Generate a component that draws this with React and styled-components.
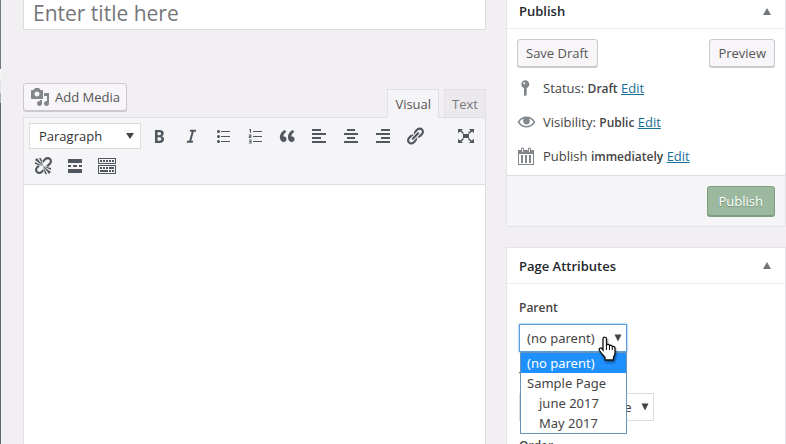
import React from "react";
import styled, { createGlobalStyle, css } from "styled-components";

const GlobalStyle = createGlobalStyle`
  *, *::before, *::after { box-sizing: border-box; }
  body {
    margin: 0;
    background: #f1eff2;
    color: #444;
    font-family: "Open Sans", "Noto Sans", sans-serif;
    font-size: 13px;
    line-height: 20px;
  }
  button, input, select, textarea { font: inherit; color: inherit; margin: 0; }
  svg { display: block; }
`;

const Page = styled.div`
  display: flex;
  height: 100vh;
  overflow: hidden;
`;

const MenuEdge = styled.div`
  flex: none;
  width: 1px;
  background: linear-gradient(#6f7b80 0 69px, #f6f6f6 69px 79px, #e4e4e6 79px 93px, #a9b2b2 93px 103px, #5d696e 103px);
`;

const Content = styled.div`
  flex: 1;
  min-width: 0;
  display: grid;
  grid-template-columns: minmax(0, 1fr) 280px;
  align-items: start;
  gap: 20px;
  padding-left: 22px;
`;

const Main = styled.main`
  display: flex;
  flex-direction: column;
  height: 100vh;
`;

const TitleInput = styled.input`
  width: 100%;
  height: 30px;
  flex: none;
  padding: 0 9px 4px;
  border: 1px solid #ddd;
  border-top: 0;
  background: #fff;
  font-size: 21px;
  line-height: 26px;
  outline: none;
  &::placeholder { color: #757678; opacity: 1; }
`;

const EditorTools = styled.div`
  display: flex;
  justify-content: space-between;
  align-items: flex-start;
  padding-top: 53px;
`;

const Button = styled.button`
  display: inline-flex;
  align-items: center;
  gap: 5px;
  height: 28px;
  padding: 0 8px;
  border: 1px solid #ccc9ce;
  border-radius: 3px;
  background: #f7f5f8;
  box-shadow: 0 1px 0 #ccc9ce;
  color: #555;
  white-space: nowrap;
  ${(p) => p.$media && css`padding: 0 6px;`}
  ${(p) => p.$primary && css`
    height: 30px;
    padding: 0 11px;
    background: #9cb99f;
    border-color: #7c9f80;
    box-shadow: 0 1px 0 #7c9f80;
    color: #fff;
    text-shadow: 0 1px 1px #6d9272;
  `}
`;

const Tabs = styled.div`
  display: flex;
  gap: 5px;
  padding-top: 6px;
`;

const Tab = styled.button`
  position: relative;
  height: 28px;
  padding: 0 7px;
  border: 1px solid #e1dfe3;
  border-bottom: 0;
  background: ${(p) => (p.$active ? "#f5f4f6" : "#ebe9ec")};
  color: ${(p) => (p.$active ? "#555" : "#777")};
  ${(p) => p.$active && css`height: 29px; margin-bottom: -1px;`}
`;

const Editor = styled.section`
  flex: 1;
  display: flex;
  flex-direction: column;
  border: 1px solid #e0dee2;
  border-bottom: 0;
  background: #fff;
`;

const Toolbar = styled.div`
  display: flex;
  flex-direction: column;
  padding: 3px 5px;
  background: #f5f4f6;
  border-bottom: 1px solid #dedce0;
`;

const ToolRow = styled.div`
  display: flex;
  align-items: center;
  gap: 4px;
  height: 30px;
`;

const ToolButton = styled.button`
  display: grid;
  place-items: center;
  width: 28px;
  height: 28px;
  padding: 0;
  border: 0;
  background: none;
  color: #50575f;
  ${(p) => p.$end && css`margin-left: auto;`}
`;

const TextArea = styled.textarea`
  flex: 1;
  width: 100%;
  border: 0;
  padding: 10px;
  resize: none;
  outline: none;
  background: #fff;
`;

const SelectWrap = styled.div`
  position: relative;
  width: ${(p) => p.$width};
`;

const Select = styled.select`
  appearance: none;
  display: block;
  width: 100%;
  height: 28px;
  padding: 0 20px 0 7px;
  border: 1px solid #ddd;
  border-radius: 0;
  background: #fff;
  font-family: "Noto Sans", "Open Sans", sans-serif;
  outline: none;
  ${(p) => p.$toolbar && css`
    height: 26px;
    padding-left: 9px;
    font-family: "Open Sans", "Noto Sans", sans-serif;
    color: #333;
  `}
  ${(p) => p.$focused && css`
    border-color: #5b9dd9;
    box-shadow: 0 0 2px #5b9dd9;
  `}
`;

const SelectArrow = styled.svg`
  position: absolute;
  right: ${(p) => (p.$toolbar ? "7px" : "5px")};
  top: 50%;
  margin-top: -4px;
  width: 8px;
  height: 8px;
  pointer-events: none;
  color: #444;
`;

const Options = styled.ul`
  position: absolute;
  z-index: 2;
  top: 100%;
  left: 1px;
  right: 0;
  margin: 0;
  padding: 0;
  list-style: none;
  background: #fff;
  border: 1px solid #6a93b8;
  font-family: "Noto Sans", "Open Sans", sans-serif;
`;

const Option = styled.li`
  height: 20px;
  line-height: 20px;
  padding-left: ${(p) => (p.$nested ? "18px" : "6px")};
  background: ${(p) => (p.$active ? "#1e90ff" : "transparent")};
  color: ${(p) => (p.$active ? "#fff" : "#444")};
`;

const Pointer = styled.svg`
  position: absolute;
  z-index: 3;
  left: 79px;
  top: 12px;
  width: 20px;
  height: 25px;
  filter: drop-shadow(1px 2px 1px #0006);
`;

const Sidebar = styled.aside`
  display: flex;
  flex-direction: column;
  gap: 20px;
`;

const Panel = styled.section`
  border: 1px solid #e5e3e7;
  background: #fff;
  ${(p) => p.$clipped && css`border-top: 0;`}
`;

const PanelHeader = styled.header`
  display: flex;
  align-items: center;
  justify-content: space-between;
  height: ${(p) => (p.$clipped ? "29px" : "36px")};
  padding: 0 14px 0 12px;
  ${(p) => p.$clipped && css`padding-bottom: 6px;`}
  border-bottom: 1px solid #eceaed;
`;

const PanelTitle = styled.h2`
  margin: 0;
  font-size: 13px;
  font-weight: 600;
  color: #23282d;
`;

const Toggle = styled.button`
  padding: 0;
  border: 0;
  background: none;
  color: #72777c;
`;

const Actions = styled.div`
  display: flex;
  justify-content: space-between;
  padding: 10px 10px 4px;
`;

const StatusList = styled.div`
  display: flex;
  flex-direction: column;
  padding: 0 9px 2px;
`;

const StatusRow = styled.div`
  display: flex;
  align-items: center;
  gap: 7px;
  height: 34px;
  color: #82878c;
`;

const StatusText = styled.span`
  color: #444;
  b { font-size: 12px; font-weight: 600; }
  a { color: #16719a; }
`;

const PanelFooter = styled.footer`
  display: flex;
  justify-content: flex-end;
  padding: 10px;
  border-top: 1px solid #dedce0;
  background: #f5f4f6;
`;

const Fields = styled.div`
  display: flex;
  flex-direction: column;
  padding: 14px 12px;
`;

const Label = styled.label`
  height: 20px;
  margin-bottom: 6px;
  font-size: 12px;
  font-weight: 600;
  color: #444;
`;

const Spacer = styled.div`
  height: 15px;
`;

const Icon = ({ size = 20, children, ...rest }) => (
  <svg width={size} height={size} viewBox="0 0 20 20" fill="currentColor" aria-hidden="true" {...rest}>
    {children}
  </svg>
);

const Down = ({ toolbar }) => (
  <SelectArrow $toolbar={toolbar} viewBox="0 0 8 8" aria-hidden="true">
    <path d={toolbar ? "M0 1h8L4 7z" : "M0.500 0.500h7L4 7.500z"} fill="currentColor" />
  </SelectArrow>
);

const UpIcon = () => (
  <svg width="8" height="7" viewBox="0 0 8 7" aria-hidden="true">
    <path d="M4 0 8 7H0z" fill="currentColor" />
  </svg>
);

const icons = {
  media: <path d="M13 11V4c0-.55-.45-1-1-1h-1.670L9 1H5L3.670 3H2c-.55 0-1 .45-1 1v7c0 .55.45 1 1 1h10c.55 0 1-.45 1-1zM7 4.500c1.380 0 2.500 1.120 2.500 2.500S8.380 9.500 7 9.500 4.500 8.380 4.500 7 5.620 4.500 7 4.500zM14 6h5v10.500c0 1.380-1.120 2.500-2.500 2.500S14 17.880 14 16.500s1.120-2.500 2.500-2.500c.17 0 .34.020.5.050V9h-3V6zm-4 8.050V13h2v3.500c0 1.380-1.120 2.500-2.500 2.500S7 17.880 7 16.500 8.120 14 9.500 14c.17 0 .34.020.5.050z" />,
  bold: <path d="M6 4v13h4.540c1.370 0 2.460-.33 3.260-1 .8-.66 1.200-1.580 1.200-2.770 0-.84-.17-1.510-.51-2.010s-.9-.85-1.670-1.030v-.09c.57-.1 1.020-.4 1.360-.9s.51-1.130.51-1.910c0-1.140-.39-1.980-1.170-2.500C12.750 4.260 11.500 4 9.780 4H6zm2.570 5.150V6.260h1.360c.73 0 1.270.11 1.610.32.34.22.51.58.51 1.070 0 .54-.16.92-.47 1.150s-.82.35-1.510.35h-1.500zm0 2.190h1.600c1.440 0 2.160.53 2.160 1.610 0 .6-.17 1.050-.51 1.340s-.86.43-1.570.43H8.570v-3.380z" />,
  italic: <path d="M15.200 3.800h-6l-.5 2h2L8.200 14.800H6.100l-.6 2h6.200l.5-2h-1.900l2.500-9h1.900z" />,
  ul: <path d="M5.500 7C4.670 7 4 6.330 4 5.500 4 4.680 4.670 4 5.500 4 6.320 4 7 4.680 7 5.500 7 6.330 6.320 7 5.500 7zM8 5h9v1H8V5zm-2.500 7c-.83 0-1.500-.67-1.500-1.500C4 9.680 4.670 9 5.500 9c.82 0 1.500.68 1.500 1.500 0 .83-.68 1.500-1.500 1.500zM8 10h9v1H8v-1zm-2.500 7c-.83 0-1.500-.67-1.500-1.500 0-.82.67-1.500 1.500-1.500.82 0 1.500.68 1.500 1.500 0 .83-.68 1.500-1.500 1.500zM8 15h9v1H8v-1z" />,
  ol: <path d="M8 5h9v1H8zm0 5h9v1H8zm0 5h9v1H8zM4 3.600 5.300 3H6v4H5V4.100L4 4.500zM3.800 8.600h2.600v1.900L4.900 11.200h1.600v.8H3.800v-1.600l1.700-.6v-.4H3.800zM3.800 13.500h2.700V17.500H3.800v-.8h1.700v-.8H4.200v-.8h1.300v-.8H3.800z" />,
  quote: <path d="M9.490 13.220c0-.74-.2-1.380-.61-1.900-.62-.78-1.830-.88-2.530-.72-.29-1.650 1.110-3.750 2.920-4.650L7.880 4c-2.730 1.300-5.420 4.280-4.960 8.050C3.210 14.430 4.590 16 6.540 16c.85 0 1.560-.25 2.120-.75s.83-1.180.83-2.030zm8.050 0c0-.74-.2-1.380-.61-1.900-.63-.78-1.830-.88-2.530-.72-.29-1.650 1.110-3.750 2.920-4.650L15.930 4c-2.730 1.300-5.410 4.280-4.950 8.050.29 2.380 1.660 3.950 3.610 3.950.85 0 1.560-.25 2.120-.75s.83-1.180.83-2.030z" />,
  left: <path d="M12 5V3H3v2h9zm5 4V7H3v2h14zm-5 4v-2H3v2h9zm5 4v-2H3v2h14z" />,
  center: <path d="M14 5V3H6v2h8zm3 4V7H3v2h14zm-3 4v-2H6v2h8zm3 4v-2H3v2h14z" />,
  right: <path d="M17 5V3H8v2h9zm0 4V7H3v2h14zm0 4v-2H8v2h9zm0 4v-2H3v2h14z" />,
  link: <path d="M17.740 2.760c1.680 1.690 1.680 4.410 0 6.100l-1.530 1.520c-1.120 1.120-2.700 1.470-4.140 1.090l2.620-2.610.76-.77.76-.76c.84-.84.84-2.200 0-3.040-.84-.85-2.200-.85-3.040 0l-.77.760-3.380 3.380c-.37-1.440-.02-3.020 1.100-4.140l1.520-1.530c1.690-1.680 4.420-1.680 6.100 0zM8.590 13.430l5.340-5.340c.42-.42.42-1.100 0-1.520-.44-.43-1.130-.39-1.530 0l-5.330 5.340c-.42.42-.42 1.100 0 1.520.44.43 1.130.39 1.520 0zm-.76 2.290l4.140-4.150c.38 1.440.03 3.020-1.090 4.140l-1.520 1.530c-1.690 1.680-4.410 1.680-6.100 0-1.680-1.680-1.680-4.420 0-6.100l1.530-1.520c1.120-1.120 2.700-1.470 4.140-1.100l-4.140 4.150c-.85.84-.85 2.200 0 3.050.84.84 2.200.84 3.040 0z" />,
  unlink: <path d="M17.740 2.260c1.680 1.690 1.680 4.410 0 6.100l-1.530 1.520c-.32.33-.69.58-1.080.77L13 10l1.690-1.640.76-.77.76-.76c.84-.84.84-2.200 0-3.040-.84-.85-2.200-.85-3.040 0l-.77.760-.76.760L10 7l-.65-2.140c.19-.38.44-.75.77-1.070l1.520-1.530c1.690-1.680 4.420-1.680 6.100 0zM2 4l8 6-6-8zm4-2l4 8-2-8H6zM2 6l8 4-8-2V6zm7.360 7.690L10 13l.74 2.350-1.380 1.390c-1.690 1.680-4.410 1.680-6.100 0-1.680-1.680-1.680-4.420 0-6.100l1.390-1.380L7 10l-.69.640-1.520 1.530c-.85.84-.85 2.200 0 3.040.84.85 2.200.85 3.040 0zM18 16l-8-6 6 8zm-4 2l-4-8 2 8h2zm4-4l-8-4 8 2v2z" />,
  more: <path d="M17 7V3H3v4h14zM6 11V9H3v2h3zm6 0V9H8v2h4zm5 0V9h-3v2h3zm0 6v-4H3v4h14z" />,
  kitchen: <path d="M19 2v6H1V2h18zm-1 5V3H2v4h16zM5 4v2H3V4h2zm3 0v2H6V4h2zm3 0v2H9V4h2zm3 0v2h-2V4h2zm3 0v2h-2V4h2zm2 5v9H1V9h18zm-1 8v-7H2v7h16zM5 11v2H3v-2h2zm3 0v2H6v-2h2zm3 0v2H9v-2h2zm6 0v2h-5v-2h5zm-6 3v2H3v-2h8zm3 0v2h-2v-2h2zm3 0v2h-2v-2h2z" />,
  full: <path d="M7 8h6v4H7zM2 3h5L5.500 4.500 8 7 7 8 4.500 5.500 2 7zM18 3v4l-2-1.500L13 8l-1-1 2.500-2.500L13 3zM2 17v-4l2.500 1.500L7 12l1 1-2.500 2.500L7 17zM18 17h-5l1.500-1.500L12 13l1-1 2.500 2.500L18 13z" />,
  pin: <path fillRule="evenodd" d="M13.300 6.200c0 1.700-1 3.200-2.600 3.800v6.700L9 18.300l-1-.8V10C6.300 9.400 5.300 7.900 5.300 6.200c0-2.200 1.800-4 4-4s4 1.800 4 4zM7.200 5.200a1 1 0 1 0 2 0a1 1 0 1 0-2 0z" />,
  eye: <path d="M19 9.400C17 6 14 4.500 10.500 4.500S4 6 1.900 9.400l-.4.600.4.600c2 3.400 5.200 5 8.600 5s6.500-1.600 8.500-5l.4-.6zM10.500 14c-2.900 0-5.400-1.500-7-4C4.600 8.300 6.300 7 8.400 6.500c-.8.600-1.300 1.500-1.300 2.600 0 1.900 1.500 3.400 3.400 3.400s3.400-1.500 3.400-3.400c0-1.100-.5-2-1.300-2.600 2.100.5 3.800 1.800 4.900 3.500-1.600 2.500-4.100 4-7 4z" />,
  calendar: <path d="M15 4h3v15H2V4h3V3c0-.41.15-.76.44-1.060.29-.29.65-.44 1.060-.44s.77.150 1.060.440c.29.3.44.650.440 1.060v1h4V3c0-.41.15-.76.44-1.060.29-.29.65-.44 1.060-.44s.77.150 1.060.440c.29.3.44.650.440 1.060v1zM6 3v2.500c0 .28.220.5.5.5s.5-.22.5-.5V3c0-.28-.22-.5-.5-.5S6 2.720 6 3zm7 0v2.500c0 .28.220.5.5.5s.5-.22.5-.5V3c0-.28-.22-.5-.5-.5s-.5.220-.5.5zm4 15V8H3v10h14zM7 9v8H5V9h2zm4 0v8H9V9h2zm4 0v8h-2V9h2z" />,
};

const TOOLS = [
  ["Bold", "bold"],
  ["Italic", "italic"],
  ["Bulleted list", "ul"],
  ["Numbered list", "ol"],
  ["Blockquote", "quote"],
  ["Align left", "left"],
  ["Align center", "center"],
  ["Align right", "right"],
  ["Insert link", "link"],
  ["Distraction-free writing mode", "full"],
];

const MORE_TOOLS = [
  ["Remove link", "unlink"],
  ["Insert Read More tag", "more"],
  ["Toolbar toggle", "kitchen"],
];

const STATUSES = [
  ["pin", "Status:", "Draft"],
  ["eye", "Visibility:", "Public"],
  ["calendar", "Publish", "immediately"],
];

const PARENTS = [
  { name: "(no parent)", active: true },
  { name: "Sample Page" },
  { name: "june 2017", nested: true },
  { name: "May 2017", nested: true },
];

const Tool = ({ label, icon }) => (
  <ToolButton type="button" aria-label={label} $end={icon === "full"}>
    <Icon>{icons[icon]}</Icon>
  </ToolButton>
);

export default function App() {
  return (
    <Page>
      <GlobalStyle />
      <MenuEdge />
      <Content>
        <Main>
          <TitleInput aria-label="Title" placeholder="Enter title here" />
          <EditorTools>
            <Button type="button" $media>
              <Icon color="#82878c">{icons.media}</Icon>
              Add Media
            </Button>
            <Tabs>
              <Tab type="button" $active>Visual</Tab>
              <Tab type="button">Text</Tab>
            </Tabs>
          </EditorTools>
          <Editor>
            <Toolbar>
              <ToolRow>
                <SelectWrap $width="112px">
                  <Select $toolbar aria-label="Format" defaultValue="Paragraph">
                    <option>Paragraph</option>
                  </Select>
                  <Down toolbar />
                </SelectWrap>
                {TOOLS.map(([label, icon]) => <Tool key={icon} label={label} icon={icon} />)}
              </ToolRow>
              <ToolRow>
                {MORE_TOOLS.map(([label, icon]) => <Tool key={icon} label={label} icon={icon} />)}
              </ToolRow>
            </Toolbar>
            <TextArea aria-label="Page content" />
          </Editor>
        </Main>
        <Sidebar>
          <Panel $clipped>
            <PanelHeader $clipped>
              <PanelTitle>Publish</PanelTitle>
              <Toggle type="button" aria-label="Toggle Publish"><UpIcon /></Toggle>
            </PanelHeader>
            <Actions>
              <Button type="button">Save Draft</Button>
              <Button type="button">Preview</Button>
            </Actions>
            <StatusList>
              {STATUSES.map(([icon, label, value]) => (
                <StatusRow key={icon}>
                  <Icon>{icons[icon]}</Icon>
                  <StatusText>{label} <b>{value}</b> <a href="#edit">Edit</a></StatusText>
                </StatusRow>
              ))}
            </StatusList>
            <PanelFooter>
              <Button type="button" $primary>Publish</Button>
            </PanelFooter>
          </Panel>
          <Panel>
            <PanelHeader>
              <PanelTitle>Page Attributes</PanelTitle>
              <Toggle type="button" aria-label="Toggle Page Attributes"><UpIcon /></Toggle>
            </PanelHeader>
            <Fields>
              <Label htmlFor="parent">Parent</Label>
              <SelectWrap $width="108px">
                <Select id="parent" $focused defaultValue="(no parent)">
                  {PARENTS.map((p) => <option key={p.name}>{p.name}</option>)}
                </Select>
                <Down />
                <Options role="listbox" aria-label="Parent">
                  {PARENTS.map((p) => (
                    <Option key={p.name} role="option" aria-selected={!!p.active} $active={p.active} $nested={p.nested}>
                      {p.name}
                    </Option>
                  ))}
                </Options>
                <Pointer viewBox="0 0 20 25" aria-hidden="true">
                  <path d="M5 14V3c0-2.500 3.500-2.500 3.500 0v6c1-1 2.500-.7 3 .6 1-.7 2.400-.3 2.800.8 1.300-.4 2.700.4 2.700 2V17c0 2-1 3-1.500 4.500V24H7v-2.500C5 19 3 17 1.500 14.500.5 12.500 2.500 11 4 12.800z" fill="#fff" stroke="#111" strokeWidth="1.300" />
                  <path d="M8.500 9v5M11.500 9.500V14M14.300 10.500V14" stroke="#111" />
                </Pointer>
              </SelectWrap>
              <Spacer />
              <Label htmlFor="template">Template</Label>
              <SelectWrap $width="135px">
                <Select id="template" defaultValue="Default Template">
                  <option>Default Template</option>
                </Select>
                <Down />
              </SelectWrap>
              <Spacer />
              <Label htmlFor="order">Order</Label>
            </Fields>
          </Panel>
        </Sidebar>
      </Content>
    </Page>
  );
}
